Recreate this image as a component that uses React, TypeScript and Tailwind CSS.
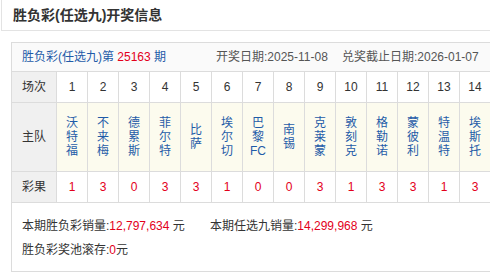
import React from "react";

const teams: string[][] = [
  ["沃", "特", "福"],
  ["不", "来", "梅"],
  ["德", "累", "斯"],
  ["菲", "尔", "特"],
  ["比", "萨"],
  ["埃", "尔", "切"],
  ["巴", "黎", "FC"],
  ["南", "锡"],
  ["克", "莱", "蒙"],
  ["敦", "刻", "克"],
  ["格", "勒", "诺"],
  ["蒙", "彼", "利"],
  ["特", "温", "特"],
  ["埃", "斯", "托"],
];
const results = ["1", "3", "0", "3", "3", "1", "0", "0", "3", "1", "3", "3", "1", "3"];

const font = { fontFamily: '"Liberation Sans", "Noto Sans CJK SC", sans-serif' };

export default function App() {
  return (
    <div className="w-[490px] h-[274px] overflow-hidden bg-white text-[#333]" style={font}>
      <div className="ml-[1px] w-[540px] h-[31px] border-l border-b border-[#e3e3e3] flex items-center pl-[11px] text-[14px] font-bold text-[#333]">
        胜负彩(任选九)开奖信息
      </div>
      <div className="mt-[11px] ml-[11px] w-[540px] border border-[#dcdcdc]">
        <div className="h-[29px] bg-[#fafafa] border-b border-[#dcdcdc] flex items-center pl-[10px] text-[12px]">
          <span className="w-[194px] text-[#1f5ba8]">
            胜负彩(任选九)第 <span className="text-[#e3001b]">25163</span> 期
          </span>
          <span className="w-[126px] text-[#555]">开奖日期:2025-11-08</span>
          <span className="text-[#555]">兑奖截止日期:2026-01-07</span>
        </div>
        <div className="grid grid-cols-[45px_repeat(14,31px)] text-[12px]">
          <div className="h-[31px] bg-[#f0f0f0] border-r border-b border-[#dcdcdc] flex items-center justify-center">场次</div>
          {results.map((_, i) => (
            <div key={"n" + i} className="h-[31px] border-r border-b border-[#dcdcdc] flex items-center justify-center text-[#333]">
              {i + 1}
            </div>
          ))}
          <div className="h-[69px] bg-[#f0f0f0] border-r border-b border-[#dcdcdc] flex items-center justify-center">主队</div>
          {teams.map((t, i) => (
            <div key={"t" + i} className="h-[69px] bg-[#fcfbee] border-r border-b border-[#dcdcdc] flex flex-col items-center justify-center text-[#1f5ba8] leading-[14px]">
              {t.map((c, j) => (
                <span key={j}>{c}</span>
              ))}
            </div>
          ))}
          <div className="h-[31px] bg-[#f0f0f0] border-r border-b border-[#dcdcdc] flex items-center justify-center">彩果</div>
          {results.map((r, i) => (
            <div key={"r" + i} className="h-[31px] border-r border-b border-[#dcdcdc] flex items-center justify-center text-[#e3001b]">
              {r}
            </div>
          ))}
        </div>
        <div className="h-[68px] pt-[11px] pl-[10px] text-[12px] leading-[24px]">
          <div className="flex">
            <span className="w-[188px]">
              本期胜负彩销量:<span className="text-[#e3001b]">12,797,634</span> 元
            </span>
            <span>
              本期任选九销量:<span className="text-[#e3001b]">14,299,968</span> 元
            </span>
          </div>
          <div>
            胜负彩奖池滚存:<span className="text-[#e3001b]">0</span>元
          </div>
        </div>
      </div>
    </div>
  );
}
